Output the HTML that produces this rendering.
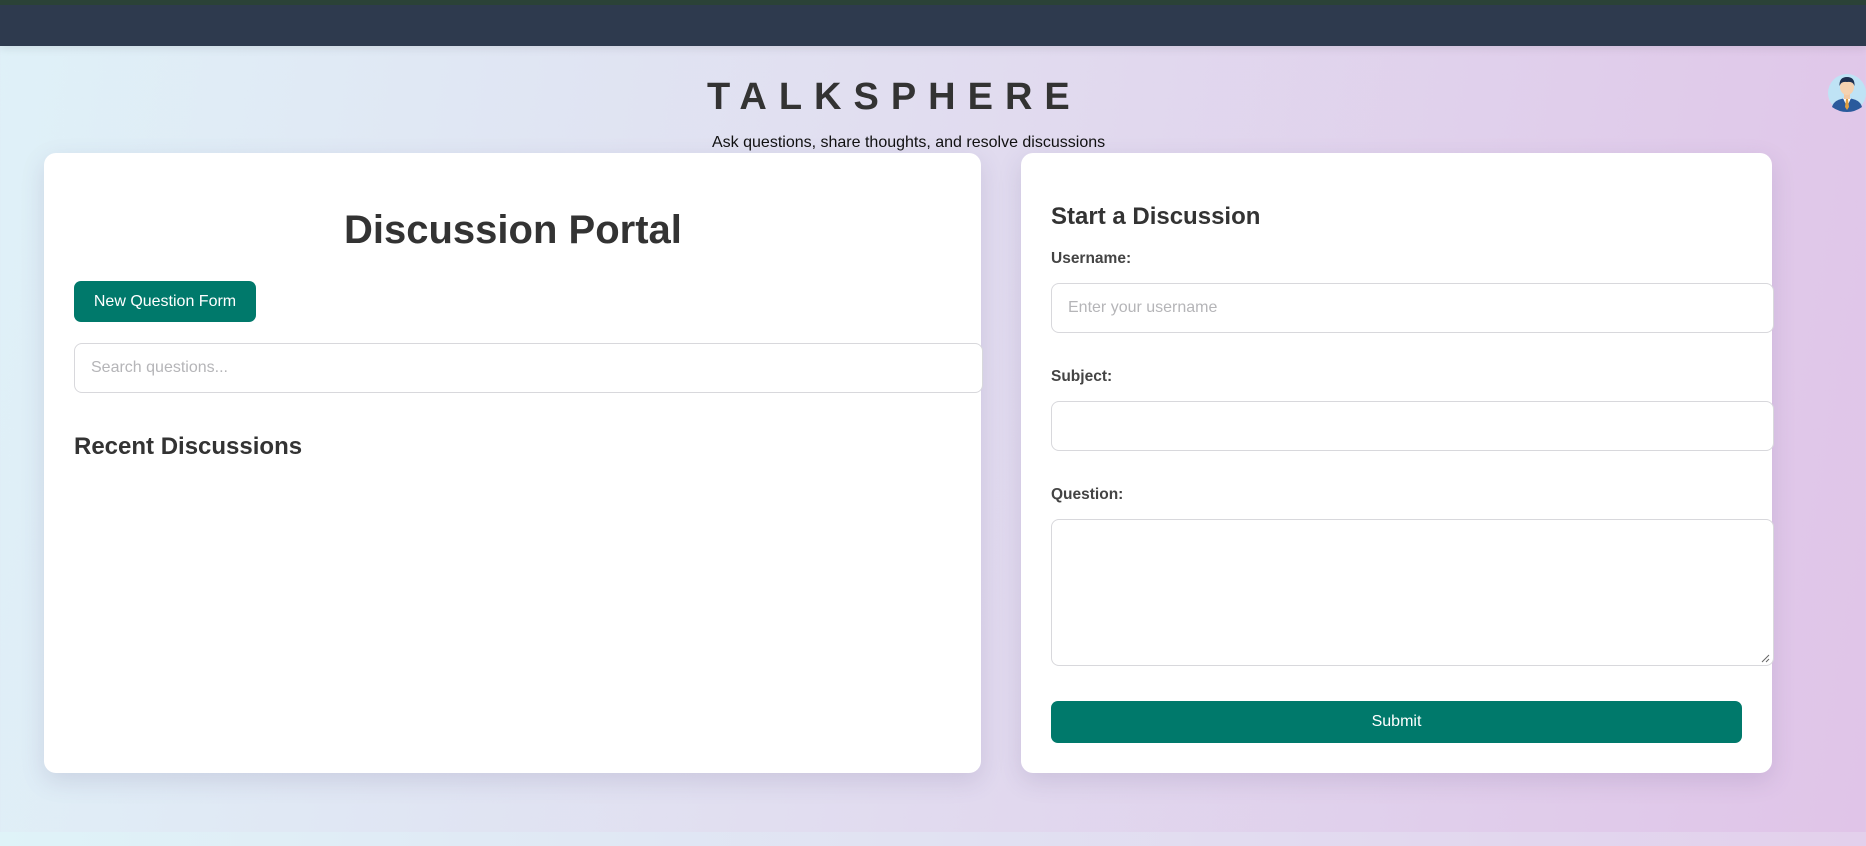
<!DOCTYPE html>
<html><head><meta charset="utf-8"><style>
*{box-sizing:border-box;margin:0;padding:0}
html,body{width:1866px;height:846px;overflow:hidden}
body{font-family:"Liberation Sans",Arial,sans-serif;background:linear-gradient(100deg,#dff1f8 0%,#e1def0 45%,#e0c4e8 100%);position:relative}
.top{position:absolute;left:0;top:0;width:1866px;height:46px;background:#2e3a4e;border-top:5px solid #2b4237;box-shadow:0 3px 8px rgba(0,0,0,.08)}
.title{position:absolute;left:707px;top:75px;font-size:38px;font-weight:bold;letter-spacing:12px;color:#333;line-height:44px}
.sub{position:absolute;left:712px;top:134px;font-size:16px;color:#111}
.card{position:absolute;background:#fff;border-radius:12px;box-shadow:0 8px 24px rgba(80,70,120,.15)}
.h1{position:absolute;font-size:40px;font-weight:bold;color:#333}
.btn{position:absolute;background:#00796b;color:#fff;border-radius:7px;font-size:16px;display:flex;align-items:center;justify-content:center}
.inp{position:absolute;border:1px solid #d8d8dc;border-radius:8px;background:#fff;color:#b5b5b8;font-size:16px;padding-left:16px;display:flex;align-items:center}
.h2{position:absolute;font-size:24px;font-weight:bold;color:#333}
.lbl{position:absolute;font-size:15.5px;font-weight:bold;color:#444}
.foot{position:absolute;left:0;top:832px;width:1866px;height:14px;background:linear-gradient(90deg,#dff3f8,#e3d0ec)}
</style></head><body>
<div class="top"></div>
<div class="title">TALKSPHERE</div>
<div class="sub">Ask questions, share thoughts, and resolve discussions</div>
<svg style="position:absolute;left:1827px;top:73px" width="40" height="40" viewBox="0 0 40 40">
<circle cx="20" cy="20" r="19" fill="#bfe3f5"/>
<path d="M5 34 Q7 26 20 25 Q33 26 35 34 Q28 39 20 39 Q12 39 5 34Z" fill="#2a5a9c"/>
<path d="M16 25 L20 34 L24 25Z" fill="#fff"/>
<path d="M19 26 L21 26 L22 34 L20 37 L18 34Z" fill="#e0a040"/>
<rect x="17" y="19" width="6" height="7" fill="#f1c9a5"/>
<ellipse cx="20" cy="14" rx="7" ry="8" fill="#f5d2b0"/>
<path d="M12.5 13 Q12 4 20 4 Q28 4 27.5 13 Q26 8 20 9 Q14 8 12.5 13Z" fill="#1e3050"/>
</svg>

<div class="card" style="left:44px;top:153px;width:937px;height:620px"></div>
<div class="h1" style="left:344px;top:208px">Discussion Portal</div>
<div class="btn" style="left:74px;top:281px;width:182px;height:41px">New Question Form</div>
<div class="inp" style="left:74px;top:343px;width:909px;height:50px">Search questions...</div>
<div class="h2" style="left:74px;top:433px">Recent Discussions</div>

<div class="card" style="left:1021px;top:153px;width:751px;height:620px"></div>
<div class="h2" style="left:1051px;top:203px">Start a Discussion</div>
<div class="lbl" style="left:1051px;top:250px">Username:</div>
<div class="inp" style="left:1051px;top:283px;width:723px;height:50px">Enter your username</div>
<div class="lbl" style="left:1051px;top:368px">Subject:</div>
<div class="inp" style="left:1051px;top:401px;width:723px;height:50px"></div>
<div class="lbl" style="left:1051px;top:486px">Question:</div>
<div class="inp" style="left:1051px;top:519px;width:723px;height:147px"></div>
<svg style="position:absolute;left:1760px;top:653px" width="10" height="10"><path d="M9 2 L2 9 M9 6 L6 9" stroke="#666" stroke-width="1"/></svg>
<div class="btn" style="left:1051px;top:701px;width:691px;height:42px">Submit</div>
<div class="foot"></div>
</body></html>
